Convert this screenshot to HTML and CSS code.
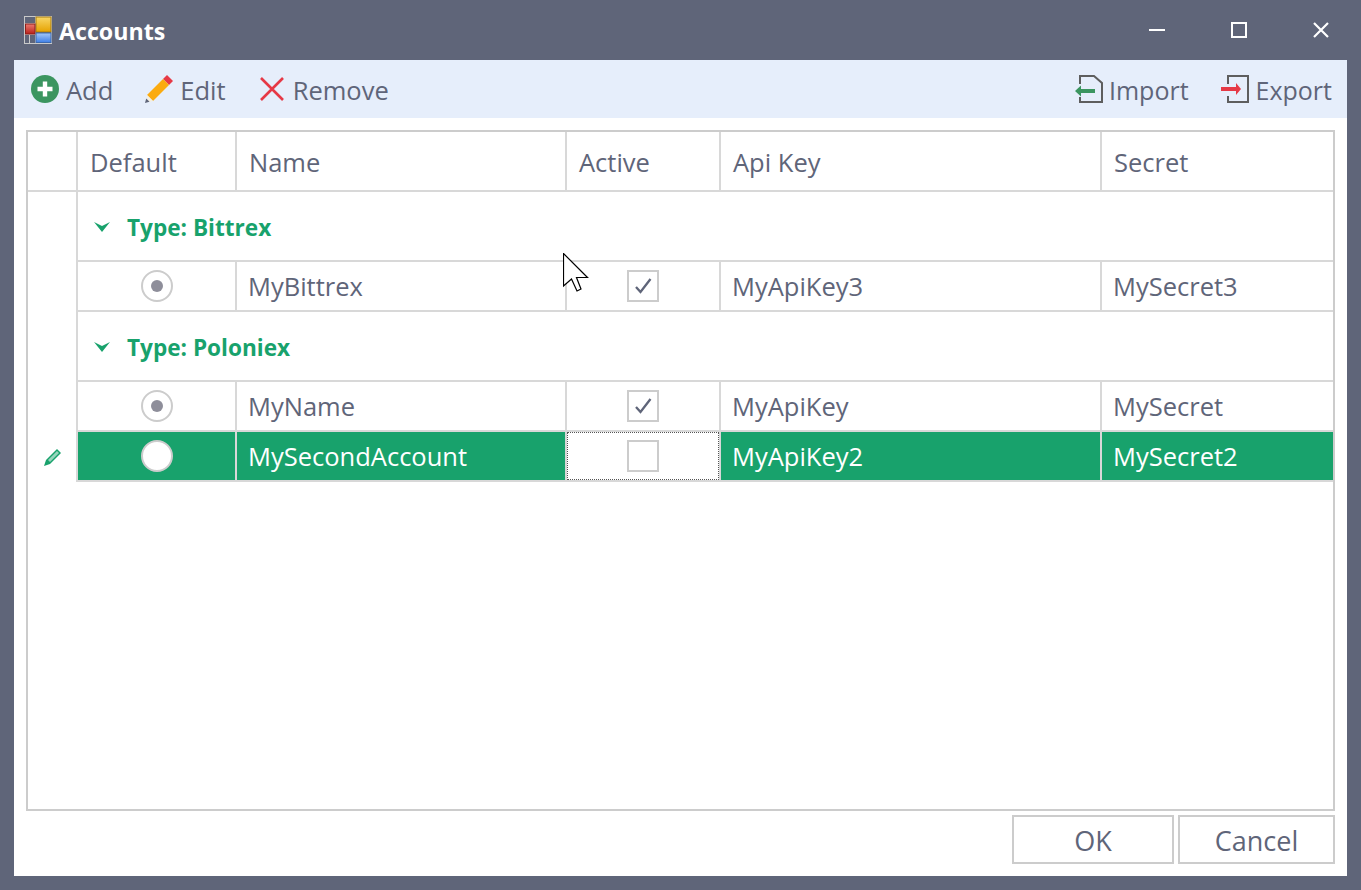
FILE: index.html
```html
<!DOCTYPE html>
<html lang="en">
<head>
  <meta charset="UTF-8">
  <title>Accounts</title>
  <link rel="stylesheet" href="styles.css">
</head>
<body>
  <div class="window">
    <div class="titlebar">
      <svg class="app-icon" width="28" height="28" viewBox="0 0 28 28">
        <defs>
          <linearGradient id="yellow" x1="0" y1="0" x2="0" y2="1"><stop offset="0" stop-color="#f8d766"/><stop offset="1" stop-color="#e6a200"/></linearGradient>
          <linearGradient id="red" x1="0" y1="0" x2="0" y2="1"><stop offset="0" stop-color="#ee7a70"/><stop offset="1" stop-color="#b8201a"/></linearGradient>
          <linearGradient id="blue" x1="0" y1="0" x2="0" y2="1"><stop offset="0" stop-color="#a6c8f8"/><stop offset="1" stop-color="#3f7fe6"/></linearGradient>
        </defs>
        <rect x="0.5" y="0.5" width="27" height="27" fill="none" stroke="#c9c9c9"/>
        <path d="M0 7.500h11M0 18.500h11M11.500 0v28M5.500 18v10" stroke="#c9c9c9" fill="none"/>
        <rect x="12" y="1" width="15" height="15" fill="url(#yellow)" stroke="#a87c10"/>
        <rect x="1.500" y="8" width="9.500" height="10" fill="url(#red)" stroke="#8e1f1a"/>
        <rect x="12" y="17" width="15" height="9.500" fill="url(#blue)" stroke="#3c69ad"/>
      </svg>
      <span class="title">Accounts</span>
      <div class="win-controls">
        <svg width="16" height="16" viewBox="0 0 16 16"><path d="M0 8h16" stroke="#fff" stroke-width="2"/></svg>
        <svg width="16" height="16" viewBox="0 0 16 16"><rect x="1" y="1" width="14" height="14" fill="none" stroke="#fff" stroke-width="2"/></svg>
        <svg width="16" height="16" viewBox="0 0 16 16"><path d="M1 1l14 14M15 1L1 15" stroke="#fff" stroke-width="2.200"/></svg>
      </div>
    </div>

    <div class="content">
      <div class="toolbar">
        <button class="tool tool-add">
          <svg width="28" height="28" viewBox="0 0 28 28"><circle cx="14" cy="14" r="14" fill="#3b9560"/><path d="M14 6.500v15M6.500 14h15" stroke="#fff" stroke-width="4.400"/></svg>
          <span>Add</span>
        </button>
        <button class="tool tool-edit">
          <svg width="28" height="28" viewBox="0 0 28 28">
            <path d="M22 0l6 6-4 4-6-6z" fill="#e63946"/>
            <path d="M18 4l6 6L8 26l-6-6z" fill="#fbab10"/>
            <path d="M2 20l6 6-3 1-2-.5-1-2.500z" fill="#f4efe2"/>
            <path d="M0 28l1.200-4.500 3.300 3.300z" fill="#5f6579"/>
          </svg>
          <span>Edit</span>
        </button>
        <button class="tool tool-remove">
          <svg width="24" height="24" viewBox="0 0 24 24"><path d="M1 1l22 22M23 1L1 23" stroke="#e63946" stroke-width="2.600"/></svg>
          <span>Remove</span>
        </button>
        <button class="tool tool-import">
          <svg width="28" height="28" viewBox="0 0 28 28">
            <path d="M5 9V1H19l8 7v19H5v-5" fill="none" stroke="#5e5e5e" stroke-width="2"/>
            <path d="M0 16l6-5.500v3.500h14v4H6v3.500z" fill="#3b9560"/>
          </svg>
          <span>Import</span>
        </button>
        <button class="tool tool-export">
          <svg width="28" height="28" viewBox="0 0 28 28">
            <path d="M7 9V1H27V27H7v-6" fill="none" stroke="#5e5e5e" stroke-width="2"/>
            <path d="M0 12h15V8l5 6-5 6v-4H0z" fill="#e63946"/>
          </svg>
          <span>Export</span>
        </button>
      </div>

      <div class="main">
        <div class="grid">
          <div class="row head">
            <div class="cell"></div>
            <div class="cell">Default</div>
            <div class="cell">Name</div>
            <div class="cell">Active</div>
            <div class="cell">Api Key</div>
            <div class="cell">Secret</div>
          </div>

          <div class="row group">
            <div class="cell indicator"></div>
            <div class="cell group-label">
              <svg width="16" height="10" viewBox="0 0 16 10"><path d="M0 0l8 4 8-4-8 10z" fill="#18a26c"/></svg>
              Type: Bittrex
            </div>
          </div>
          <div class="row">
            <div class="cell indicator"></div>
            <div class="cell center"><span class="radio on"></span></div>
            <div class="cell">MyBittrex</div>
            <div class="cell center">
              <span class="check"><svg width="18" height="16" viewBox="0 0 18 16"><path d="M2 9l4.500 5L16.500 1" fill="none" stroke="#5f6579" stroke-width="2.300"/></svg></span>
            </div>
            <div class="cell">MyApiKey3</div>
            <div class="cell">MySecret3</div>
          </div>

          <div class="row group">
            <div class="cell indicator"></div>
            <div class="cell group-label">
              <svg width="16" height="10" viewBox="0 0 16 10"><path d="M0 0l8 4 8-4-8 10z" fill="#18a26c"/></svg>
              Type: Poloniex
            </div>
          </div>
          <div class="row">
            <div class="cell indicator"></div>
            <div class="cell center"><span class="radio on"></span></div>
            <div class="cell">MyName</div>
            <div class="cell center">
              <span class="check"><svg width="18" height="16" viewBox="0 0 18 16"><path d="M2 9l4.500 5L16.500 1" fill="none" stroke="#5f6579" stroke-width="2.300"/></svg></span>
            </div>
            <div class="cell">MyApiKey</div>
            <div class="cell">MySecret</div>
          </div>
          <div class="row selected">
            <div class="cell indicator">
              <svg width="18" height="18" viewBox="0 0 18 18"><path d="M13 1l4 4L6 16l-6 2 2-6z" fill="#18a26c"/><path d="M4 12l9-9 2 2-9 9z" fill="#fff" opacity=".55"/></svg>
            </div>
            <div class="cell center"><span class="radio"></span></div>
            <div class="cell">MySecondAccount</div>
            <div class="cell focused"><div class="focus-box"><span class="check"></span></div></div>
            <div class="cell">MyApiKey2</div>
            <div class="cell">MySecret2</div>
          </div>
        </div>

        <div class="buttons">
          <button class="btn btn-ok">OK</button>
          <button class="btn btn-cancel">Cancel</button>
        </div>
      </div>
    </div>

    <svg class="cursor" width="26" height="40" viewBox="0 0 26 40">
      <path d="M.5 .5V33L8.500 26 14 38l4-2-4.500-11.500H24.500z" fill="#fff" stroke="#000" stroke-width="1.200"/>
    </svg>
  </div>
</body>
</html>
```

FILE: styles.css
```css
* {
  box-sizing: border-box;
}
html, body {
  margin: 0;
  padding: 0;
}
body {
  font-family: "Open Sans", "Noto Sans", sans-serif;
  font-size: 25.5px;
  color: #5f6579;
}
.window {
  position: relative;
  width: 1361px;
  height: 890px;
  padding: 0 14px 14px;
  background: #5f6579;
  display: flex;
  flex-direction: column;
}

/* title bar */
.titlebar {
  height: 60px;
  flex: none;
  display: flex;
  align-items: center;
  padding: 0 18px 0 10px;
  color: #fff;
}
.app-icon {
  margin: 0 7px 0 0;
}
.title {
  font-weight: 700;
  font-size: 23.2px;
  padding-top: 2px;
}
.win-controls {
  margin-left: auto;
  display: flex;
  gap: 66px;
}

/* toolbar */
.toolbar {
  height: 58px;
  background: #e6eefb;
  display: flex;
  align-items: center;
  padding: 0 15px 0 17px;
}
.tool {
  border: 0;
  background: none;
  padding: 0;
  font: inherit;
  color: inherit;
  display: flex;
  align-items: center;
  gap: 7px;
}
.tool span {
  padding-top: 2px;
}
.tool-edit {
  margin-left: 32px;
}
.tool-remove {
  margin-left: 34px;
  gap: 9px;
}
.tool-import {
  margin-left: auto;
  gap: 6px;
  font-size: 25px;
}
.tool-export {
  margin-left: 32px;
  font-size: 25px;
}

.content {
  flex: 1;
  background: #fff;
  display: flex;
  flex-direction: column;
}
.main {
  flex: 1;
  padding: 12px 12px 12px;
  display: flex;
  flex-direction: column;
}

/* data grid */
.grid {
  height: 681px;
  flex: none;
  border: 2px solid #cccccc;
}
.row {
  display: grid;
  grid-template-columns: 50px 159px 330px 154px 381px 1fr;
  height: 50px;
}
.row.head {
  height: 60px;
}
.row.group {
  height: 70px;
}
.cell {
  display: flex;
  align-items: center;
  padding-left: 11px;
  border-right: 2px solid #d8d8d8;
  border-bottom: 2px solid #d8d8d8;
  white-space: nowrap;
}
.cell:last-child {
  border-right: 0;
}
.head .cell {
  padding: 2px 0 0 12px;
}
.cell.center {
  justify-content: center;
  padding-left: 0;
}
.cell.indicator {
  border-bottom: 0;
  padding-left: 16px;
}
.group-label {
  grid-column: 2 / -1;
  padding: 2px 0 0 16px;
  gap: 17px;
  font-weight: 700;
  font-size: 22.6px;
  color: #18a26c;
}

.selected .cell {
  background: #18a26c;
  color: #fff;
}
.selected .cell.indicator {
  background: none;
}
.selected .cell.focused {
  background: #fff;
  padding-left: 0;
  align-items: stretch;
}
.focus-box {
  flex: 1;
  border: 1px dotted #555;
  display: flex;
  align-items: center;
  justify-content: center;
}

.radio {
  width: 32px;
  height: 32px;
  border-radius: 50%;
  border: 2px solid #cccccc;
  background: #fff;
  display: flex;
  align-items: center;
  justify-content: center;
}
.radio.on::after {
  content: "";
  width: 12px;
  height: 12px;
  border-radius: 50%;
  background: #8e8e9a;
}
.check {
  width: 32px;
  height: 32px;
  border: 2px solid #cccccc;
  display: flex;
  align-items: center;
  justify-content: center;
}

/* bottom buttons */
.buttons {
  margin-top: 4px;
  display: flex;
  justify-content: flex-end;
  gap: 4px;
}
.btn {
  height: 49px;
  background: #fff;
  border: 2px solid #cccccc;
  font: inherit;
  font-size: 27px;
  color: inherit;
  padding: 2px 0 0;
}
.btn-ok {
  width: 162px;
}
.btn-cancel {
  width: 157px;
}

.cursor {
  position: absolute;
  left: 563px;
  top: 253px;
}
```
